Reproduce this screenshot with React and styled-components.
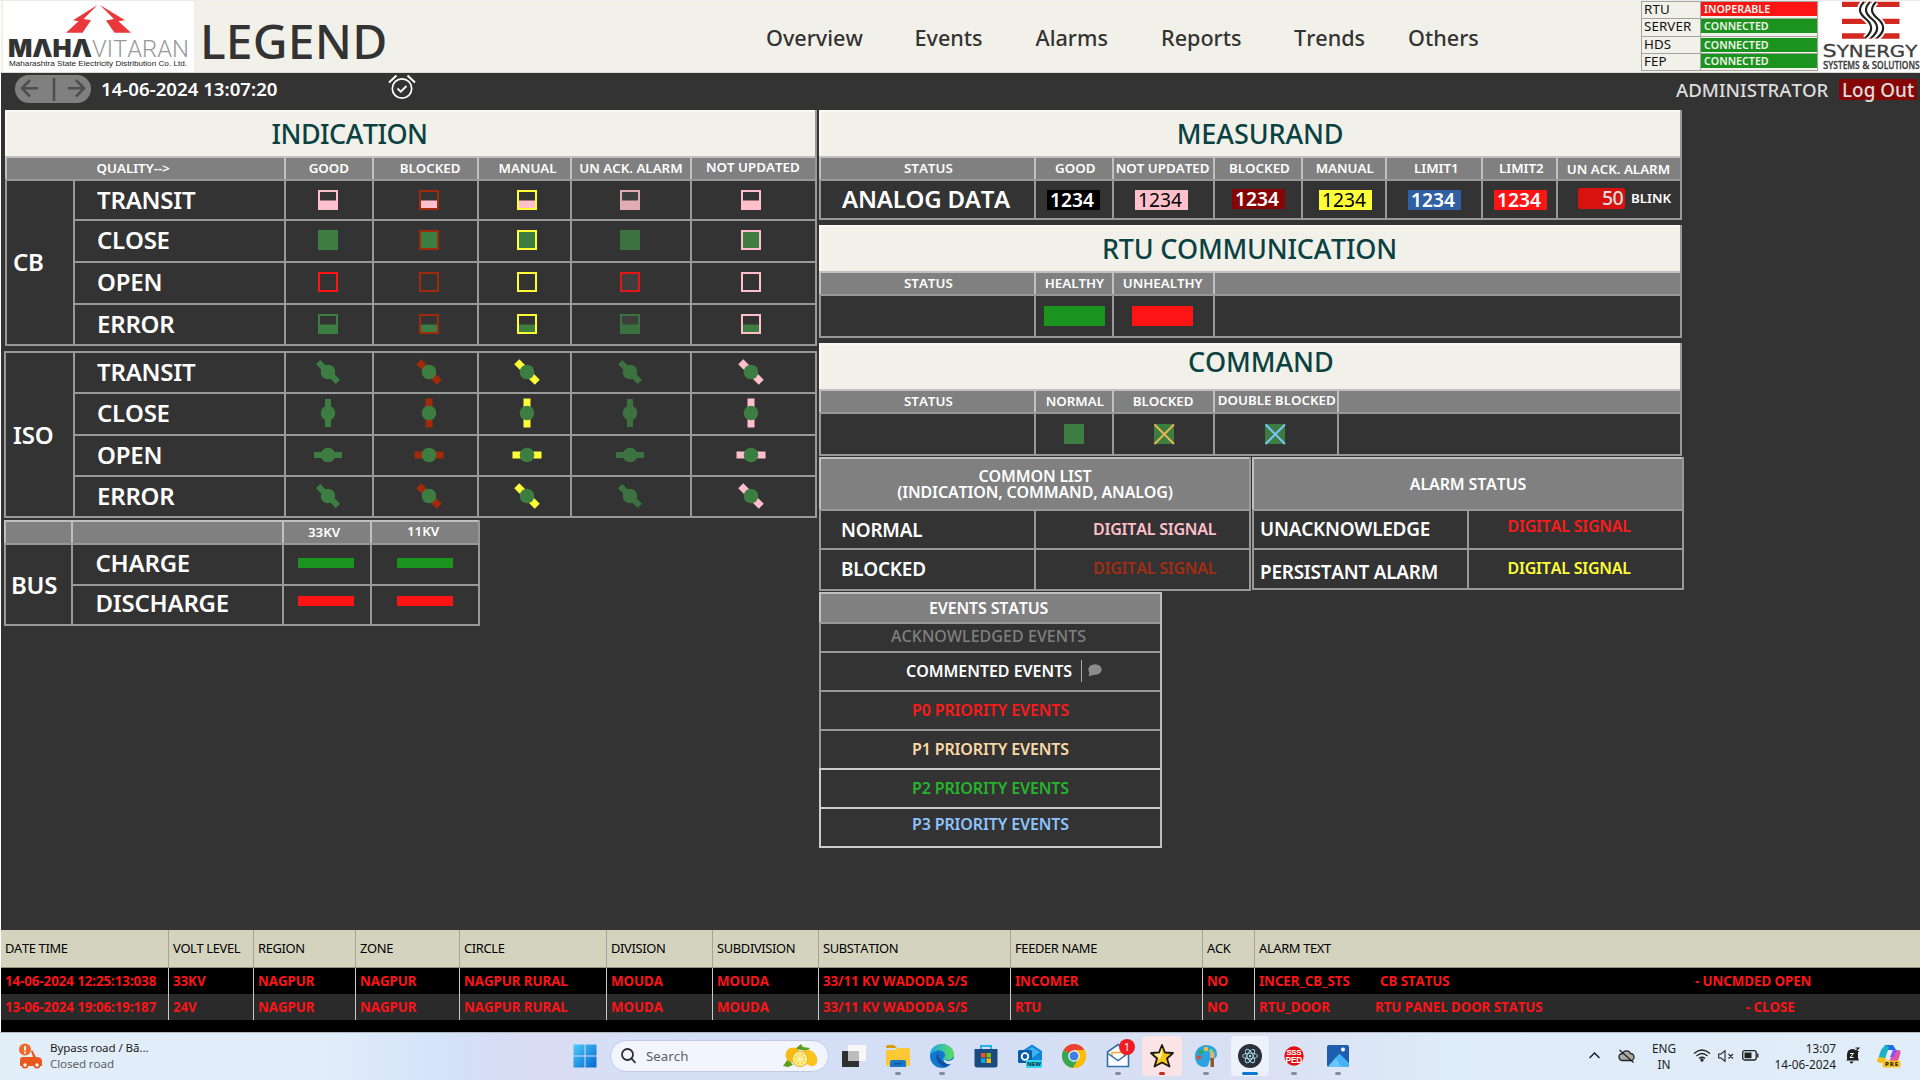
import React from "react";
import styled, { createGlobalStyle } from "styled-components";

const C = {
  bg: "#333333",
  cream: "#f2f1e9",
  grey: "#808080",
  line: "rgba(255,255,255,0.5)",
  teal: "#0b4142",
  green: "#3d7d42",
  pink: "#ffc0cb",
  brick: "#a12a0d",
  yellow: "#ffff38",
  red: "#fd1414",
  ok: "#1a931f",
};

const GlobalStyle = createGlobalStyle`
  * { box-sizing: border-box; }
  body { margin: 0; background: #fff; overflow: hidden; }
  #root {
    font-family: "Noto Sans", "Open Sans", sans-serif;
    font-kerning: none;
    white-space: nowrap;
  }
`;

const Screen = styled.div`
  width: 1920px;
  height: 1080px;
  display: flex;
  flex-direction: column;
  border-top: 1px solid #ececec;
`;

/* ---------- header ---------- */
const Header = styled.header`
  height: 72px;
  margin-left: 1px;
  background: ${C.cream};
  border-bottom: 1px solid #dcdcd6;
  display: flex;
`;
const Brand = styled.div`
  width: 191px;
  height: 71px;
  margin-left: 2px;
  background: #fff;
`;
const PageTitle = styled.h1`
  margin: 0;
  padding: 4px 0 0 6px;
  width: 566px;
  font-size: 48px;
  font-weight: 500;
  line-height: 71px;
  letter-spacing: 0.2px;
  color: #333;
`;
const Nav = styled.nav`
  display: flex;
  width: 881px;
  padding: 3px 0 0 6px;
`;
const NavItem = styled.a`
  width: ${(p) => p.$w}px;
  font-size: 21.6px;
  font-weight: 500;
  line-height: 68px;
  color: #333;
`;
const StatusTable = styled.div`
  width: 177px;
  height: 70px;
  display: grid;
  grid-template-rows: 17px 18px 17px 18px;
  border-right: 1px solid #a5a5a0;
  border-bottom: 1px solid #a5a5a0;
`;
const StatusRow = styled.div`
  display: grid;
  grid-template-columns: 59px 1fr;
  border-top: 1px solid #a5a5a0;
  border-left: 1px solid #a5a5a0;
`;
const StatusName = styled.span`
  padding-left: 2px;
  font-size: 13.33px;
  line-height: 15px;
  letter-spacing: 0.1px;
  color: #111;
  border-right: 1px solid #a5a5a0;
`;
const StatusValue = styled.span`
  height: 14px;
  margin-top: ${(p) => p.$mt}px;
  padding-left: 3px;
  font-size: 10.67px;
  font-weight: 600;
  line-height: 14px;
  color: #f4f4ec;
  background: ${(p) => (p.$bad ? C.red : C.ok)};
`;
const Vendor = styled.div`
  width: 101px;
  height: 71px;
  margin-left: auto;
  background: #fff;
`;

/* ---------- toolbar ---------- */
const Toolbar = styled.div`
  height: 37px;
  margin-left: 1px;
  padding: 0 3px 0 14px;
  background: ${C.bg};
  display: flex;
  align-items: flex-start;
`;
const History = styled.div`
  width: 76px;
  height: 28px;
  margin-top: 2px;
  border-radius: 14px;
  background: #808080;
`;
const Clock = styled.span`
  width: 297px;
  padding-left: 10px;
  font-size: 18.67px;
  font-weight: 600;
  line-height: 31px;
  color: #fff;
`;
const UserName = styled.span`
  margin-left: auto;
  width: 163px;
  font-size: 18.67px;
  font-weight: 500;
  line-height: 33px;
  color: #dedede;
`;
const LogOut = styled.button`
  width: 78px;
  height: 21px;
  margin: 6px 0 0;
  padding: 0 0 0 3px;
  border: 0;
  text-align: left;
  font: 500 18.9px/22px "Noto Sans", sans-serif;
  color: #dedede;
  background: #860606;
`;

/* ---------- legend tables ---------- */
const Main = styled.main`
  height: 820px;
  margin-left: 1px;
  padding-left: 3px;
  background: ${C.bg};
  display: flex;
`;
const LeftColumn = styled.section`
  width: 815px;
  display: flex;
  flex-direction: column;
  align-items: flex-start;
`;
const RightColumn = styled.section`
  display: flex;
  flex-direction: column;
  align-items: flex-start;
`;
const SideBySide = styled.div`
  display: flex;
  align-items: flex-start;
  gap: 1px;
`;
const Table = styled.div`
  display: grid;
  grid-template-columns: ${(p) => p.$cols};
  grid-template-rows: ${(p) => p.$rows};
  margin: ${(p) => p.$m || "0"};
  border-right: 2px solid ${(p) => (p.$bright ? "#bbb" : "#999")};
  border-bottom: 2px solid ${(p) => (p.$bright ? "#ccc" : "#999")};
`;
const Cell = styled.div`
  grid-column: span ${(p) => p.$span || 1};
  grid-row: span ${(p) => p.$rowSpan || 1};
  min-width: 0;
  display: flex;
  align-items: center;
  border-left: 2px solid ${(p) => p.$line || C.line};
  border-top: 2px solid ${(p) => p.$line || C.line};
  padding-left: ${(p) => p.$x || 0}px;
  padding-top: ${(p) => (p.$dy > 0 ? p.$dy * 2 : 0)}px;
  padding-bottom: ${(p) => (p.$dy < 0 ? -p.$dy * 2 : 0)}px;
  color: ${(p) => p.$color || "#fff"};
  font-size: 24px;
  font-weight: 600;
  letter-spacing: -0.22px;
  line-height: 1;
`;
const TitleCell = styled(Cell)`
  grid-column: 1 / -1;
  background: ${C.cream};
  color: ${C.teal};
  font-size: 27px;
  font-weight: 500;
  letter-spacing: ${(p) => p.$ls || 0}px;
`;
const HeadCell = styled(Cell)`
  background: ${C.grey};
  font-size: 13.33px;
  letter-spacing: 0;
`;
const SectionCell = styled(Cell)`
  background: ${C.grey};
  font-size: 16px;
  line-height: 16px;
  letter-spacing: -0.15px;
  text-align: center;
  ${(p) => p.$center && "justify-content: center;"}
`;
const NameCell = styled(Cell)`
  font-size: 18.9px;
`;
const SignalCell = styled(Cell)`
  font-size: 16px;
  font-weight: ${(p) => p.$w || 600};
  letter-spacing: ${(p) => p.$ls ?? -0.22}px;
`;
const Reading = styled.span`
  width: 53px;
  height: 20px;
  padding-left: 3px;
  font-size: 19.2px;
  font-weight: ${(p) => p.$w || 600};
  line-height: 20px;
  letter-spacing: 0;
  color: ${(p) => p.$fg || "#fff"};
  background: ${(p) => p.$bg};
`;
const BlinkReading = styled.span`
  width: 47px;
  height: 21px;
  padding-right: 2px;
  border-radius: 2px;
  text-align: right;
  font-size: 19.6px;
  font-weight: 500;
  line-height: 20px;
  letter-spacing: -0.7px;
  color: #dedede;
  background: #d81111;
`;
const BlinkLabel = styled.span`
  margin-left: 6px;
  font-size: 13.33px;
  letter-spacing: 0;
`;
const Swatch = styled.i`
  width: ${(p) => p.$w}px;
  height: ${(p) => p.$h}px;
  background: ${(p) => p.$c};
`;
const CommentMark = styled.span`
  height: 22px;
  margin-left: 9px;
  padding-left: 6px;
  border-left: 1px solid #aaa;
  display: flex;
  align-items: center;
`;

/* ---------- alarm list ---------- */
const AlarmList = styled.section`
  height: 102px;
  margin-left: 1px;
  background: #000;
`;
const AlarmRow = styled.div`
  display: grid;
  grid-template-columns: 168px 85px 102px 104px 147px 106px 106px 192px 192px 52px 1fr;
  height: ${(p) => (p.$head ? 38 : 26)}px;
  background: ${(p) => p.$bg};
  ${(p) => p.$head && "border-bottom: 1px solid #8f8f86;"}
  color: ${(p) => (p.$head ? "#000" : "#fb1418")};
  font-size: ${(p) => (p.$head ? 12.9 : 13.33)}px;
  font-weight: ${(p) => (p.$head ? 400 : 700)};
  letter-spacing: ${(p) => (p.$head ? -0.35 : -0.07)}px;
  line-height: ${(p) => (p.$head ? 36 : 26)}px;
`;
const AlarmCell = styled.span`
  padding-left: 4px;
  border-right: 1px solid ${(p) => (p.$head ? "#a3a39b" : "#c9c9c9")};
  &:last-child { border-right: 0; display: flex; }
`;
const AlarmPart = styled.span`
  width: ${(p) => p.$w}px;
`;

/* ---------- taskbar ---------- */
const Taskbar = styled.footer`
  height: 48px;
  padding-bottom: 2px;
  border-top: 1px solid #b4b8bf;
  background: linear-gradient(90deg, #e2eef8 0, #e0ecf8 340px, #d4e2fa 440px, #d9dcf3 545px, #d5e0f6 640px, #d4dff6 1000px, #d9e0f3 1250px, #deebf8 1450px, #e1edf9 1920px);
  display: flex;
  align-items: center;
`;
const Widget = styled.div`
  width: 563px;
  padding-left: 18px;
  display: flex;
  align-items: center;
  gap: 7px;
`;
const TwoLines = styled.div`
  font-size: ${(p) => p.$size || 12}px;
  line-height: 16px;
  color: #1c1c1c;
  text-align: ${(p) => p.$align || "left"};
  width: ${(p) => (p.$w ? p.$w + "px" : "auto")};
  letter-spacing: ${(p) => p.$ls || 0}px;
`;
const Muted = styled.div`
  color: #5b6067;
`;
const TaskButton = styled.div`
  position: relative;
  width: 44px;
  height: 40px;
  display: flex;
  align-items: center;
  justify-content: center;
  &::before {
    content: "";
    position: absolute;
    inset: 0 ${(p) => (p.$tile === "#fce4e6" ? 2 : 3)}px;
    border-radius: 4px;
    background: ${(p) => p.$tile || "transparent"};
  }
  &::after {
    content: "";
    position: absolute;
    bottom: 1px;
    width: ${(p) => (p.$wide ? 16 : 6)}px;
    height: 3px;
    border-radius: 2px;
    background: ${(p) => p.$dot || "transparent"};
  }
  svg { position: relative; }
`;
const SearchBox = styled.div`
  width: 219px;
  height: 32px;
  margin: 0 3px 0 3px;
  padding: 0 9px 0 10px;
  border: 1px solid #c3cbe0;
  border-radius: 16px;
  background: #f2f5fd;
  display: flex;
  align-items: center;
  font-size: 13.3px;
  color: #5c5f66;
`;
const SearchText = styled.span`
  flex: 1;
  padding-left: 10px;
`;
const Tray = styled.div`
  margin-left: auto;
  padding-right: 19px;
  display: flex;
  align-items: center;
`;
const TrayItem = styled.span`
  width: ${(p) => p.$w}px;
  display: flex;
`;

/* ---------- drawings ---------- */
const MahaLogo = () => (
  <svg width="191" height="71" viewBox="3 1 191 71">
    <path fill="#e8383b" d="M97.500 5 73 20.200l5.500 1L66 32.800h16.500L91 20.300l-7.500-1.300zM100 5l25 15.200-6.500 1L131 32.800h-16.500L106 20.500l8-1.500z" />
    <text x="8" y="57" fontFamily="Inter, sans-serif" fontWeight="900" fontSize="24" fill="#333" textLength="84" lengthAdjust="spacingAndGlyphs">MΛHΛ</text>
    <text x="92" y="57" fontFamily="Roboto, sans-serif" fontWeight="300" fontSize="24.500" fill="#999" textLength="97" lengthAdjust="spacingAndGlyphs">VITARAN</text>
    <text x="9" y="66" fontFamily="Liberation Sans, sans-serif" fontSize="8" fill="#222" textLength="178" lengthAdjust="spacingAndGlyphs">Maharashtra State Electricity Distribution Co. Ltd.</text>
  </svg>
);

const wave = (x) => `M${x} 2C${x - 7} 9 ${x - 4} 14 ${x + 2} 19S${x + 10} 31 ${x + 1} 38`;
const VendorLogo = () => (
  <svg width="101" height="71" viewBox="1819 1 101 71">
    <path fill="#d2281f" d="M1842 1.700h57.500V7H1842zM1842 18.700h57.500V24H1842zM1842 33.300h57.500v5.400H1842z" />
    {[1864, 1870, 1876].map((x) => <path key={x} d={wave(x)} fill="none" stroke="#fff" strokeWidth="6" />)}
    {[1864, 1870, 1876].map((x) => <path key={"k" + x} d={wave(x)} fill="none" stroke="#222" strokeWidth="2.200" />)}
    <g fill="#3d3d3d" stroke="#3d3d3d" strokeWidth=".3">
      <text transform="translate(1822.500 57) scale(1.32 1)" fontFamily="DejaVu Sans, sans-serif" fontSize="17">S<tspan fontSize="15">YNERGY</tspan></text>
      <text transform="translate(1823 68.500) scale(.84 1)" fontFamily="Open Sans, sans-serif" fontWeight="600" fontSize="11.500">S<tspan fontSize="10">YSTEMS</tspan> &amp; S<tspan fontSize="10">OLUTIONS</tspan></text>
    </g>
  </svg>
);

const HistoryArrows = () => (
  <svg width="76" height="28" fill="none" stroke="#4e4e4e" strokeWidth="2.600">
    <path d="M23 13.300H7.500M15 5 7 13.300l8 8.200M39 3v23M53 13.300h15.500M61 5l8 8.300-8 8.200" />
  </svg>
);

const AlarmClock = () => (
  <svg width="28" height="28" viewBox="0 0 28 28" fill="none" stroke="#fff">
    <circle cx="14" cy="15.500" r="9.700" strokeWidth="1.700" />
    <path strokeWidth="2" d="M1 9.500 8.500 2.500M27 9.500 19.500 2.500" />
    <path strokeWidth="1.800" d="m9.500 15.500 3.300 3.200 5.700-5.700" />
  </svg>
);

const Breaker = ({ state, frame, dim }) => {
  const fill = state === "transit" ? C.pink : C.green;
  const edge = frame || (state === "open" ? C.red : fill);
  return (
    <svg width="30" height="30" opacity={dim ? 0.86 : 1}>
      {dim && <rect x="5" y="5" width="20" height="20" fill="#404040" />}
      {state === "close" && <rect x="7" y="7" width="16" height="16" fill={fill} />}
      {(state === "transit" || state === "error") && <rect x="7" y="15.500" width="16" height="7.500" fill={fill} />}
      <rect x="6" y="6" width="18" height="18" fill="none" stroke={edge} strokeWidth="2" />
    </svg>
  );
};

const angle = { transit: -45, close: 0, open: 90, error: -45 };
const Isolator = ({ state, frame, dim }) => {
  const w = frame ? 7 : 6;
  const l = frame ? 29 : 28;
  return (
    <svg width="30" height="30" opacity={dim ? 0.86 : 1}>
      <rect x={15 - w / 2} y={15 - l / 2} width={w} height={l} fill={frame || C.green} transform={`rotate(${angle[state]} 15 15)`} />
      <circle cx="15" cy="15" r="7.300" fill={C.green} />
    </svg>
  );
};

const CommandMark = ({ cross }) => (
  <svg width="22" height="22">
    <rect x="1" y="1" width="20" height="20" fill={C.green} />
    {cross && <path d="M1.500 1.500l19.500 19.500M21 1.500 1.500 21" stroke={cross} strokeWidth="2" />}
  </svg>
);

const Bubble = () => (
  <svg width="14" height="13" fill="#8c8c8c">
    <ellipse cx="7" cy="5.500" rx="6.700" ry="5.300" />
    <path d="M2 7 .500 12.300 7 10.500z" />
  </svg>
);

/* ---------- data ---------- */
const states = ["transit", "close", "open", "error"];
const qualities = [
  { name: "GOOD", x: 22.7, icon: 27 },
  { name: "BLOCKED", x: 25.7, icon: 40, frame: C.brick },
  { name: "MANUAL", x: 19.5, icon: 33, frame: C.yellow },
  { name: "UN ACK. ALARM", x: 7.2, icon: 43, dim: true },
  { name: "NOT UPDATED", x: 14, icon: 44, frame: C.pink, dy: -1 },
];
const readings = [
  { name: "GOOD", x: 19, box: 11, bg: "#000" },
  { name: "NOT UPDATED", x: 1.7, box: 21, bg: C.pink, fg: "#000", w: 400 },
  { name: "BLOCKED", x: 14, box: 17, bg: "#860606", dy: -1 },
  { name: "MANUAL", x: 12.7, box: 16, bg: C.yellow, fg: "#000", w: 400 },
  { name: "LIMIT1", x: 27, box: 21, bg: "#305fa3" },
  { name: "LIMIT2", x: 16, box: 11, bg: C.red },
];
const priorities = [
  ["P0 PRIORITY EVENTS", "#fd1a1a", -1],
  ["P1 PRIORITY EVENTS", "#fbd9a6", -1],
  ["P2 PRIORITY EVENTS", "#27b32b", -1],
  ["P3 PRIORITY EVENTS", "#8cc4fb", -4],
];
const alarmHead = ["DATE TIME", "VOLT LEVEL", "REGION", "ZONE", "CIRCLE", "DIVISION", "SUBDIVISION", "SUBSTATION", "FEEDER NAME", "ACK", "ALARM TEXT"];
const alarms = [
  { bg: "#000", cells: ["14-06-2024 12:25:13:038", "33KV", "NAGPUR", "NAGPUR", "NAGPUR RURAL", "MOUDA", "MOUDA", "33/11 KV WADODA S/S", "INCOMER", "NO"], text: [["INCER_CB_STS", 121], ["CB STATUS", 315], ["- UNCMDED OPEN", 160]] },
  { bg: "#2a2a2a", cells: ["13-06-2024 19:06:19:187", "24V", "NAGPUR", "NAGPUR", "NAGPUR RURAL", "MOUDA", "MOUDA", "33/11 KV WADODA S/S", "RTU", "NO"], text: [["RTU_DOOR", 116], ["RTU PANEL DOOR STATUS", 371], ["- CLOSE", 100]] },
];
const nav = [["Overview", 148.5], ["Events", 121], ["Alarms", 125.5], ["Reports", 133], ["Trends", 114], ["Others", 100]];
const links = [["RTU", "INOPERABLE", true, 0], ["SERVER", "CONNECTED", false, 0], ["HDS", "CONNECTED", false, 1], ["FEP", "CONNECTED", false, 0]];

/* ---------- taskbar icons ---------- */
const Ico = ({ children, w = 24 }) => <svg width={w} height="24" viewBox={`0 0 ${w} 24`}>{children}</svg>;

const WindowsIcon = () => (
  <Ico>
    <defs><linearGradient id="win" x1="0" y1="0" x2="1" y2="1"><stop offset="0" stopColor="#4cc9fb" /><stop offset="1" stopColor="#0469cf" /></linearGradient></defs>
    <path fill="url(#win)" d="M.500.500H11.500v11H.500zM12.500.500h11v11h-11zM.500 12.500h11v11H.500zM12.500 12.500h11v11h-11z" />
  </Ico>
);
const Lemons = () => (
  <svg width="36" height="24" viewBox="0 0 36 24">
    <path fill="#5f9e1e" d="M12 5 18 0l2 3 7 1-3 3zM0 22l5-7 5 6-5 2z" />
    <circle cx="10" cy="11" r="7.500" fill="#f7b914" />
    <ellipse cx="27" cy="14" rx="6.500" ry="9" fill="#fbc41d" transform="rotate(-35 27 14)" />
    <circle cx="17" cy="15" r="8.300" fill="#f2b51a" />
    <circle cx="17" cy="15" r="7.200" fill="#fdf0a8" />
    <circle cx="17" cy="15" r="5.800" fill="#fbdc4c" />
    <path stroke="#fff8cf" d="M17 8.500v13M10.500 15h13M12.500 10.500l9 9M21.500 10.500l-9 9" />
  </svg>
);
const TaskView = () => (
  <Ico><rect y="7" width="17" height="16" fill="#303030" /><rect x="6" y="1" width="18" height="16" fill="#f7f7f7" /><rect x="6" y="7" width="11" height="10" fill="#bdbdbd" /></Ico>
);
const Folder = () => (
  <Ico><path fill="#dd9a0b" d="M0 3q0-2 2-2h6l3 3H0z" /><path fill="#fcc934" d="M0 6h9l2-2h12q1 0 1 1v17H2q-2 0-2-2z" /><path fill="#1976c9" d="M4 23v-5q0-2 2-2h12q2 0 2 2v5z" /><path fill="#0c57a1" d="M8 19h8v1.500H8z" /></Ico>
);
const Edge = () => (
  <Ico>
    <defs><linearGradient id="edg" x1="0" x2="1"><stop offset="0" stopColor="#1fa7e8" /><stop offset="1" stopColor="#5be05a" /></linearGradient></defs>
    <circle cx="12" cy="12" r="12" fill="#1477cf" />
    <path fill="url(#edg)" d="M0 12C0 4 6 0 12 0s12 4.500 12 10c0 4-3 6-6 6-2.500 0-4-1-4-2 0-.700 1-1.200 1-3 0-2.500-2.500-4.500-6-4.500C4.500 6.500 1 9 0 12z" />
    <path fill="#0e4f9e" d="M8 9c-3 3-2 10 5 13.500 3 .800 7-2 9-5-6 3-13 .500-14-8.500z" />
    <path fill="#d9e1f6" d="M13.500 13.500c0 2 2 3.500 5 3.500 2 0 4-1 5.500-2.500V19l-3 1c-5 1-8-2-7.500-6.500z" />
  </Ico>
);
const Store = () => (
  <Ico><path fill="none" stroke="#26b3ef" strokeWidth="2" d="M7 6V2h10v4" /><path fill="#1b4a80" d="M.500 5h23v16q0 2.500-2.500 2.500H3Q.500 23.500.500 21z" /><path fill="#f15022" d="M7 9h4.500v4.500H7z" /><path fill="#80bb0a" d="M12.500 9H17v4.500h-4.500z" /><path fill="#05a6f0" d="M7 14.500h4.500V19H7z" /><path fill="#ffba08" d="M12.500 14.500H17V19h-4.500z" /></Ico>
);
const Outlook = () => (
  <Ico><path fill="#1285da" d="M4 7 14 .500 24 7v12H4z" /><path fill="#3bb2f2" d="M6 8l8-5 8 5-8 6z" /><rect y="6" width="14" height="13" rx="1.500" fill="#0a5dab" /><circle cx="7" cy="12.500" r="3.300" fill="none" stroke="#fff" strokeWidth="1.800" /><rect x="8" y="16" width="16" height="8" rx="1" fill="#33d6ee" /><text x="9" y="22.300" fontFamily="Noto Sans, sans-serif" fontWeight="800" fontSize="6" fill="#05334f" textLength="14">NEW</text></Ico>
);
const Chrome = () => (
  <Ico><circle cx="12" cy="12" r="12" fill="#fbbc05" /><path fill="#ea4335" d="M12 12 1.600 6A12 12 0 0 1 22.400 6z" /><path fill="#34a853" d="M12 12 1.600 6A12 12 0 0 0 11 24l5-9z" /><path fill="#fbbc05" d="M12 6h10.400A12 12 0 0 1 11 24l6-9z" /><circle cx="12" cy="12" r="5.700" fill="#fff" /><circle cx="12" cy="12" r="4.500" fill="#3f7ee8" /></Ico>
);
const Mail = () => (
  <svg width="40" height="40" viewBox="0 0 40 40">
    <path fill="#fff" stroke="#2f6fae" strokeWidth="1.600" d="M9.500 16 20 8.500 30.500 16v14.500h-21z" />
    <path fill="none" stroke="#f4a938" strokeWidth="1.600" d="M14 21v-4.500h12V21" />
    <path fill="none" stroke="#2f6fae" strokeWidth="1.500" d="M10 17.500l10 7 10-7" />
    <circle cx="29" cy="11" r="8" fill="#ee1c25" />
    <text x="29" y="15" textAnchor="middle" fontFamily="Open Sans, sans-serif" fontSize="11" fill="#fff">1</text>
  </svg>
);
const StarIcon = () => (
  <Ico><path fill="#f7c71c" stroke="#1c1a10" strokeWidth="1.800" strokeLinejoin="round" d="m12 1 3 7.500 8 .500-6 5.500 2.500 8L12 18.500 4.500 22.500 7 14.500 1 9l8-.500z" /><path fill="#fff3a0" d="M12 4v7L8 18l1-4-5-4 6-.500z" /></Ico>
);
const Paint = () => (
  <Ico><path fill="#2ba3e3" d="M12 1c7 0 11 4 11 9 0 6-5 4-7 6s0 7-5 7C4 23 1 18 1 12S6 1 12 1z" /><circle cx="12" cy="5" r="2.200" fill="#f6c22b" /><circle cx="6.500" cy="8" r="2.200" fill="#2fa84f" /><circle cx="5" cy="13.500" r="2.200" fill="#e4492e" /><circle cx="17" cy="7" r="2" fill="#8ddc4f" /><path fill="#8a5a2b" d="M16.500 14h3.500v9h-3.500z" /><path fill="#d8b47c" d="M16 8h4.500v6H16z" /></Ico>
);
const Electron = () => (
  <Ico><circle cx="12" cy="12" r="12" fill="#2b2e3b" /><g fill="none" stroke="#a9dfe8" strokeWidth=".9"><ellipse cx="12" cy="12" rx="7.500" ry="2.900" /><ellipse cx="12" cy="12" rx="7.500" ry="2.900" transform="rotate(60 12 12)" /><ellipse cx="12" cy="12" rx="7.500" ry="2.900" transform="rotate(120 12 12)" /></g><circle cx="12" cy="12" r="1.200" fill="#a9dfe8" /></Ico>
);
const Ped = () => (
  <Ico><circle cx="12" cy="12" r="9.700" fill="#e60d0d" /><g fontFamily="Liberation Sans, sans-serif" fontWeight="700" fill="#fff"><text x="4.500" y="11" fontSize="8" textLength="15">SSS</text><text x="3.500" y="18.500" fontSize="8.500" textLength="17">PED</text></g></Ico>
);
const Photos = () => (
  <Ico><rect x="1" y="1" width="22" height="22" rx="2" fill="#1d5fae" /><path fill="#42b4f3" d="M2 22.500 12 11q1.500-1.500 3 0l8 8v2q0 2-2 2H3z" /><path fill="#8fd5fb" d="m2 22.500 8-9 5 9.500H3z" opacity=".5" /><circle cx="17" cy="5.500" r="2" fill="#fff" /></Ico>
);
const Traffic = () => (
  <svg width="25" height="26" viewBox="0 0 25 26">
    <circle cx="7" cy="6.500" r="6" fill="#f0692b" /><path stroke="#fff" strokeWidth="1.800" d="M7 3v4.500M7 8.800v1.700" />
    <path fill="#e9581c" d="M2 17q0-3 3-3h10l-2-6 1.500-.500 3.500 6.500q6 0 6 4v5H2z" />
    <circle cx="7" cy="22" r="2.600" fill="#fff" stroke="#e9581c" strokeWidth="1.800" /><circle cx="19" cy="22" r="2.600" fill="#fff" stroke="#e9581c" strokeWidth="1.800" />
  </svg>
);
const Copilot = () => (
  <Ico>
    <path fill="#1b6fe0" d="M8 1h8l3 5H9z" /><path fill="#1fb2c4" d="M8 1 4 6 1 15q0 3 3 3h3l5-15z" /><path fill="#f3c11c" d="M1.500 13 0 16q0 3 4 3l4-1 1-4z" />
    <path fill="#e254a9" d="M16 6h5q3 0 2.500 3L21 17q-1 2-4 2h-5z" /><path fill="#8a55ea" d="M16 6h4l-3 7h-4z" />
    <rect x="5.500" y="16.500" width="18" height="7" rx="1.500" fill="#fbc21d" /><text x="8" y="22.300" fontFamily="Noto Sans, sans-serif" fontWeight="800" fontSize="6" fill="#222" textLength="13">PRE</text>
  </Ico>
);

/* ---------- sections ---------- */
const tail = "211px 88px 105px 93px 120px 125px";

const QualityRows = ({ group, x, dy, rise, Icon }) => (
  <>
    <Cell $rowSpan={4} $x={x} $dy={dy}>{group}</Cell>
    {states.map((s, i) => (
      <React.Fragment key={s}>
        <Cell $x={22} $dy={rise[i]}>{s.toUpperCase()}</Cell>
        {qualities.map((q) => (
          <Cell key={q.name} $x={q.icon} $dy={rise[i]}><Icon state={s} frame={q.frame} dim={q.dim} /></Cell>
        ))}
      </React.Fragment>
    ))}
  </>
);

export default function App() {
  return (
    <>
      <GlobalStyle />
      <Screen>
        <Header>
          <Brand><MahaLogo /></Brand>
          <PageTitle>LEGEND</PageTitle>
          <Nav>{nav.map(([n, w]) => <NavItem key={n} $w={w}>{n}</NavItem>)}</Nav>
          <StatusTable>
            {links.map(([n, v, bad, mt]) => (
              <StatusRow key={n}><StatusName>{n}</StatusName><StatusValue $bad={bad} $mt={mt}>{v}</StatusValue></StatusRow>
            ))}
          </StatusTable>
          <Vendor><VendorLogo /></Vendor>
        </Header>

        <Toolbar>
          <History><HistoryArrows /></History>
          <Clock>14-06-2024 13:07:20</Clock>
          <AlarmClock />
          <UserName>ADMINISTRATOR</UserName>
          <LogOut>Log Out</LogOut>
        </Toolbar>

        <Main>
          <LeftColumn>
            <Table $cols={"68px " + tail} $rows="46px 23px 40px 42px 42px 41px" $m="0 0 5px 1px">
              <TitleCell $x={264.5} $dy={-0.5} $ls={-0.55}>INDICATION</TitleCell>
              <HeadCell $span={2} $x={89.5}>QUALITY--&gt;</HeadCell>
              {qualities.map((q) => <HeadCell key={q.name} $x={q.x} $dy={q.dy}>{q.name}</HeadCell>)}
              <QualityRows group="CB" x={6} dy={-1} rise={[0, -1, -1, -1]} Icon={Breaker} />
            </Table>
            <Table $cols={"69px " + tail} $rows="41px 42px 41px 41px" $m="0 0 2px 0">
              <QualityRows group="ISO" x={7} dy={0} rise={[-1, -1, -1, -1]} Icon={Isolator} />
            </Table>
            <Table $cols="67px 211px 88px 108px" $rows="23px 41px 40px">
              <HeadCell /><HeadCell /><HeadCell $x={24}>33KV</HeadCell><HeadCell $x={35} $dy={-1}>11KV</HeadCell>
              <Cell $rowSpan={2} $x={5}>BUS</Cell>
              <Cell $x={22.5} $dy={-2}>CHARGE</Cell>
              <Cell $x={14} $dy={-1.5}><Swatch $w={56} $h={10} $c={C.ok} /></Cell>
              <Cell $x={25} $dy={-1.5}><Swatch $w={56} $h={10} $c={C.ok} /></Cell>
              <Cell $x={22.5} $dy={-2.5}>DISCHARGE</Cell>
              <Cell $x={14} $dy={-4}><Swatch $w={56} $h={10} $c={C.red} /></Cell>
              <Cell $x={25} $dy={-4}><Swatch $w={56} $h={10} $c={C.red} /></Cell>
            </Table>
          </LeftColumn>

          <RightColumn>
            <Table $cols="215px 78px 101px 88px 84px 96px 75px 124px" $rows="46px 23px 39px" $m="0 0 5px">
              <TitleCell $x={355.7} $dy={-0.5} $ls={-0.1}>MEASURAND</TitleCell>
              <HeadCell $x={83}>STATUS</HeadCell>
              {readings.map((r) => <HeadCell key={r.name} $x={r.x}>{r.name}</HeadCell>)}
              <HeadCell $x={8.7} $dy={1}>UN ACK. ALARM</HeadCell>
              <Cell $x={21} $dy={-1}>ANALOG DATA</Cell>
              {readings.map((r) => (
                <Cell key={r.name} $x={r.box} $dy={r.dy}><Reading $bg={r.bg} $fg={r.fg} $w={r.w}>1234</Reading></Cell>
              ))}
              <Cell $x={20} $dy={-1}><BlinkReading>50</BlinkReading><BlinkLabel>BLINK</BlinkLabel></Cell>
            </Table>

            <Table $cols="215px 78px 101px 467px" $rows="46px 23px 42px" $m="0 0 5px">
              <TitleCell $x={281} $dy={-0.5} $ls={-0.25}>RTU COMMUNICATION</TitleCell>
              <HeadCell $x={83}>STATUS</HeadCell><HeadCell $x={8.7}>HEALTHY</HeadCell><HeadCell $x={8.7}>UNHEALTHY</HeadCell><HeadCell />
              <Cell /><Cell $x={8}><Swatch $w={61} $h={20} $c={C.ok} /></Cell><Cell $x={18}><Swatch $w={61} $h={20} $c={C.red} /></Cell><Cell />
            </Table>

            <Table $cols="215px 78px 101px 124px 343px" $rows="46px 23px 42px" $m="0 0 1px">
              <TitleCell $x={367} $dy={-6} $ls={-0.1}>COMMAND</TitleCell>
              <HeadCell $x={83}>STATUS</HeadCell><HeadCell $x={9.7}>NORMAL</HeadCell><HeadCell $x={18.7}>BLOCKED</HeadCell><HeadCell $x={2.7} $dy={-1}>DOUBLE BLOCKED</HeadCell><HeadCell />
              <Cell /><Cell $x={27}><CommandMark /></Cell><Cell $x={39}><CommandMark cross="#e5b653" /></Cell><Cell $x={49}><CommandMark cross="#7cc3f7" /></Cell><Cell />
            </Table>

            <SideBySide>
              <Table $cols="215px 215px" $rows="52px 39px 41px" $m="0 0 1px">
                <SectionCell $span={2} $center>COMMON LIST<br />(INDICATION, COMMAND, ANALOG)</SectionCell>
                <NameCell $x={20} $dy={0.5}>NORMAL</NameCell><SignalCell $x={57} $dy={-1} $color={C.pink}>DIGITAL SIGNAL</SignalCell>
                <NameCell $x={20} $dy={-0.5}>BLOCKED</NameCell><SignalCell $x={57} $dy={-1.5} $color="#a32d14">DIGITAL SIGNAL</SignalCell>
              </Table>
              <Table $cols="215px 215px" $rows="52px 39px 40px">
                <SectionCell $span={2} $center>ALARM STATUS</SectionCell>
                <NameCell $x={6}>UNACKNOWLEDGE</NameCell><SignalCell $x={38.5} $dy={-4} $color="#fd1a1a">DIGITAL SIGNAL</SignalCell>
                <NameCell $x={6} $dy={3.5}>PERSISTANT ALARM</NameCell><SignalCell $x={38.5} $dy={-1} $color={C.yellow}>DIGITAL SIGNAL</SignalCell>
              </Table>
            </SideBySide>

            <Table $cols="341px" $rows="30px 29px 39px 39px 39px 39px 39px" $bright>
              <SectionCell $x={108}>EVENTS STATUS</SectionCell>
              <SignalCell $x={70} $dy={-1.5} $w={500} $ls={0.05} $color="#808080">ACKNOWLEDGED EVENTS</SignalCell>
              <SignalCell $x={85} $dy={-1} $ls={-0.04}>COMMENTED EVENTS<CommentMark><Bubble /></CommentMark></SignalCell>
              {priorities.map(([label, color, dy], i) => (
                <SignalCell key={label} $x={91} $color={color} $dy={dy} $ls={-0.14} $line={i > 1 ? "#ccc" : undefined}>{label}</SignalCell>
              ))}
            </Table>
          </RightColumn>
        </Main>

        <AlarmList>
          <AlarmRow $head $bg="#d4d3be">{alarmHead.map((h) => <AlarmCell $head key={h}>{h}</AlarmCell>)}</AlarmRow>
          {alarms.map((a) => (
            <AlarmRow key={a.cells[0]} $bg={a.bg}>
              {a.cells.map((c, i) => <AlarmCell key={i}>{c}</AlarmCell>)}
              <AlarmCell>{a.text.map(([t, w]) => <AlarmPart key={t} $w={w}>{t}</AlarmPart>)}</AlarmCell>
            </AlarmRow>
          ))}
        </AlarmList>

        <Taskbar>
          <Widget>
            <Traffic />
            <TwoLines $size={11.6} $ls={-0.1}>Bypass road / Bā...<Muted>Closed road</Muted></TwoLines>
          </Widget>
          <TaskButton><WindowsIcon /></TaskButton>
          <SearchBox>
            <svg width="15" height="16" fill="none" stroke="#2b2b2b" strokeWidth="1.800"><circle cx="6.500" cy="6.500" r="5.500" /><path d="m10.500 10.500 4 4.500" /></svg>
            <SearchText>Search</SearchText>
            <Lemons />
          </SearchBox>
          <TaskButton><TaskView /></TaskButton>
          <TaskButton $dot="#858b96"><Folder /></TaskButton>
          <TaskButton $dot="#858b96"><Edge /></TaskButton>
          <TaskButton><Store /></TaskButton>
          <TaskButton><Outlook /></TaskButton>
          <TaskButton><Chrome /></TaskButton>
          <TaskButton $dot="#858b96"><Mail /></TaskButton>
          <TaskButton $tile="#fce4e6" $dot="#c42b1c"><StarIcon /></TaskButton>
          <TaskButton $dot="#858b96"><Paint /></TaskButton>
          <TaskButton $tile="#edf1fb" $dot="#0a78d4" $wide><Electron /></TaskButton>
          <TaskButton $dot="#858b96"><Ped /></TaskButton>
          <TaskButton $dot="#858b96"><Photos /></TaskButton>
          <Tray>
            <TrayItem $w={29}><svg width="11" height="7" fill="none" stroke="#222" strokeWidth="1.500"><path d="M.500 6 5.500 1l5 5" /></svg></TrayItem>
            <TrayItem $w={31}><svg width="17" height="14" fill="#aaa" stroke="#222" strokeWidth="1.300"><path d="M4.500 11.500a3.500 3.500 0 0 1 0-7 4.300 4.300 0 0 1 8 0 3.500 3.500 0 0 1 0 7z" /><path d="m1.500 1 14 12.500" /></svg></TrayItem>
            <TwoLines $align="center" $w={30} $size={11.8}>ENG<br />IN</TwoLines>
            <TrayItem $w={14} />
            <TrayItem $w={25}><svg width="18" height="13" fill="none" stroke="#222" strokeWidth="1.300"><path d="M1 4.500q8-7 16 0M3.500 7q5.500-5 11 0M6 9.500q3-2.500 6 0" /><circle cx="9" cy="11" r="1" fill="#222" /></svg></TrayItem>
            <TrayItem $w={24}><svg width="17" height="12" fill="none" stroke="#222" strokeWidth="1.100"><path d="M.700 4v4H3l4 3.300V.700L3 4zM10.500 4l4.500 4.500M15 4l-4.500 4.500" /></svg></TrayItem>
            <TrayItem $w={22}><svg width="17" height="11" fill="none" stroke="#222" strokeWidth="1.300"><rect x=".700" y=".700" width="13.500" height="9.300" rx="2" /><path d="M15.800 3.500v4" /><rect x="2.500" y="2.500" width="7" height="5.700" fill="#222" stroke="none" /></svg></TrayItem>
            <TwoLines $align="right" $w={72} $size={11.8}>13:07<br />14-06-2024</TwoLines>
            <TrayItem $w={41}><svg width="24" height="17" fill="#1f1f1f"><path d="M11 13V8q0-6 5.500-6Q20 2 20.500 5H22v6l1 2.500H9zM13.500 14.500h4q-.500 2-2 2t-2-2z" /><path fill="none" stroke="#fff" d="M14 6.500h3.500L14 10.500h3.500" /><path fill="none" stroke="#1f1f1f" strokeWidth="1.200" d="M19.500 1h3.500L19.500 4.500H23" /></svg></TrayItem>
            <Copilot />
          </Tray>
        </Taskbar>
      </Screen>
    </>
  );
}
